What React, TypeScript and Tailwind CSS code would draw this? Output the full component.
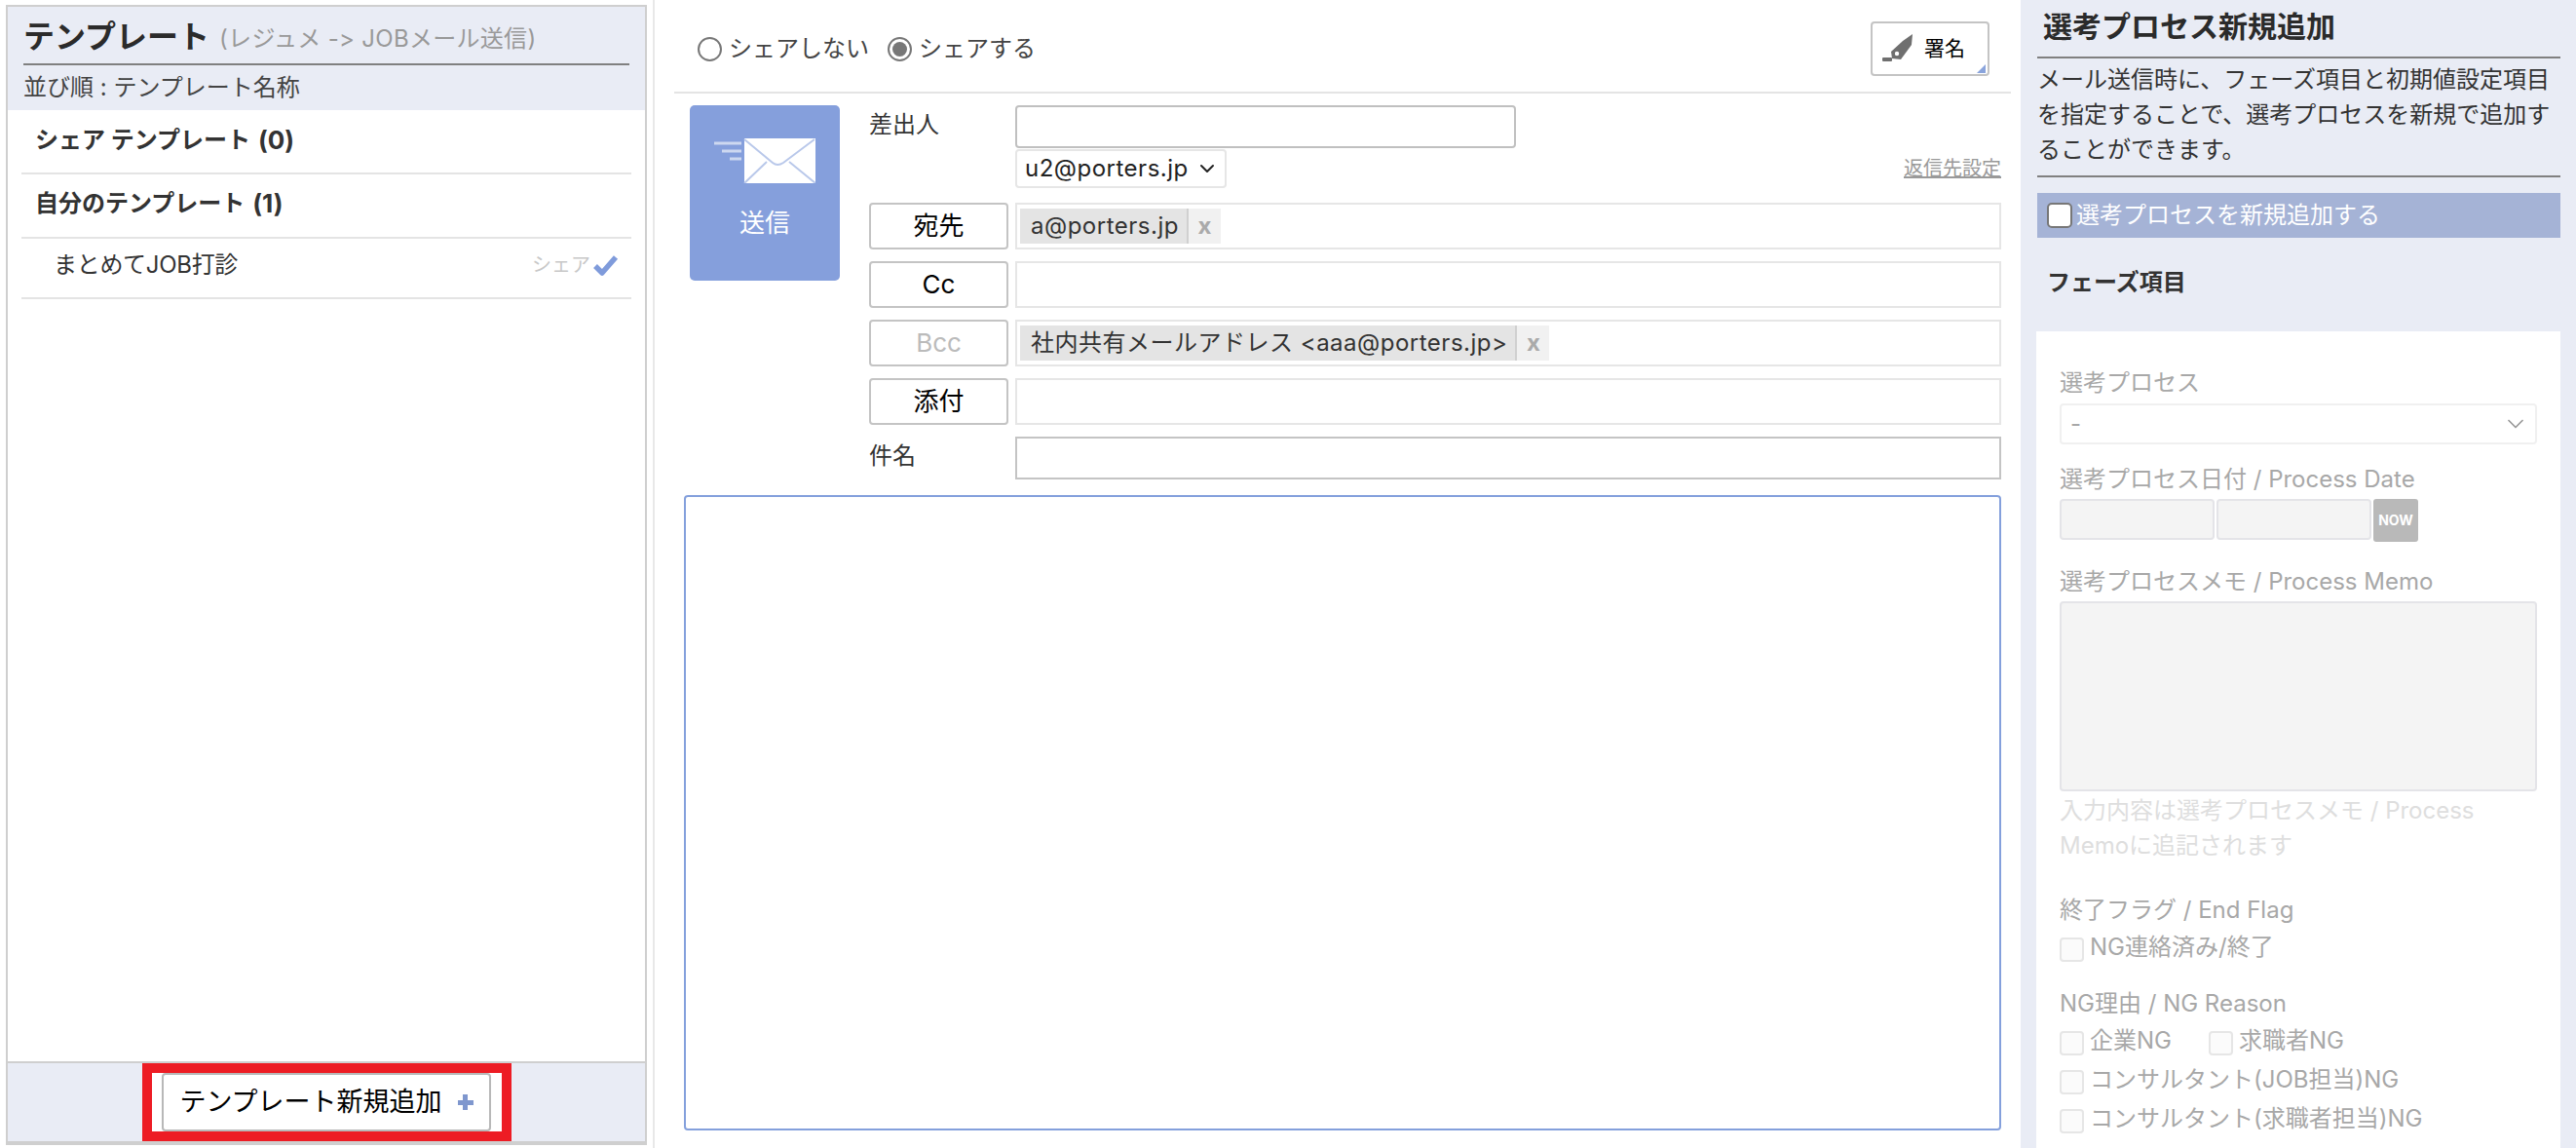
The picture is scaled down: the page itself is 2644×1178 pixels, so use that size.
import React from "react";
import { ChevronDown } from "lucide-react";

const Chip = ({ text }: { text: string }) => (
  <div className="flex h-[36px] items-center">
    <span className="flex h-full items-center bg-[#e4e4e4] pl-[11px] pr-[8px] tracking-[0.5px] text-[#333]">{text}</span>
    <span className="flex h-full w-[35px] items-center justify-center border-l-2 border-[#d0d0d0] bg-[#f1f1f1] text-[24px] font-bold text-[#aaa]">
      x
    </span>
  </div>
);

const Row = ({ label, muted, chip }: { label: string; muted?: boolean; chip?: string }) => (
  <div className="mt-[12px] flex h-[48px] gap-[7px]">
    <button
      type="button"
      className={`h-full w-[143px] rounded-[4px] border-2 border-[#c4c4c4] bg-white text-[26px] ${muted ? "text-[#bbb]" : "text-black"}`}
    >
      {label}
    </button>
    <div className="flex flex-1 items-center border-2 border-[#e6e6e6] pl-[3px]">{chip && <Chip text={chip} />}</div>
  </div>
);

const Check = ({ label, className = "" }: { label: string; className?: string }) => (
  <label className={`flex h-[36px] items-center gap-[6px] ${className}`}>
    <input
      type="checkbox"
      disabled
      className="mt-[4px] h-[25px] w-[25px] appearance-none rounded-[4px] border-2 border-[#e6e6e6] bg-[#fbfbfb]"
    />
    {label}
  </label>
);

const Envelope = () => (
  <svg width="104" height="46" viewBox="0 0 104 46" className="mt-[34px]">
    <g stroke="#cdd8f0" strokeWidth="3">
      <path d="M0 5h28M8 13h20M16 21h12" />
    </g>
    <rect x="31" y="0" width="73" height="46" fill="#fff" />
    <path d="M31 1l29 24q5 4 11 0l32-24M31 46l23-22M104 46l-27-22" fill="none" stroke="#b9c8ea" strokeWidth="2" />
  </svg>
);

const Pen = () => (
  <svg width="32" height="30" viewBox="0 0 32 30">
    <path d="M31 0l-1 11-11 15-9-1-1-7 12-11z" fill="#6f6f6f" />
    <circle cx="15" cy="20" r="2.2" fill="#fff" />
    <rect x="0" y="24" width="10" height="4" rx="1" fill="#6f6f6f" />
  </svg>
);

export default function App() {
  return (
    <div className="flex h-[1178px] w-[2644px] overflow-hidden bg-white font-['Inter','Noto_Sans_CJK_JP',sans-serif] text-[24px] leading-[36px] text-[#333] [font-variant-ligatures:none]">
      {/* templates */}
      <aside className="h-full w-[672px] shrink-0 border-r-2 border-[#e8e8e8] pl-[6px] pt-[5px]">
        <div className="flex h-[1170px] w-[658px] flex-col border-2 border-[#cfcfcf]">
          <div className="bg-[#e9ecf5] px-[16px]">
            <div className="flex h-[60px] items-center border-b-2 border-[#808080] pt-[4px]">
              <h1 className="text-[32px] font-bold text-[#2b2b2b]">テンプレート</h1>
              <span className="ml-[10px] mt-[3px] text-[24px] tracking-[0.3px] text-[#999]">(レジュメ -&gt; JOBメール送信)</span>
            </div>
            <div className="flex h-[46px] items-center text-[#444]">並び順 : テンプレート名称</div>
          </div>
          <div className="flex-1 px-[14px]">
            <div className="flex h-[66px] items-center border-b-2 border-[#e4e4e4] pb-[2px] pl-[14px] font-bold">
              シェア テンプレート<span className="ml-[8px] text-[26px]">(0)</span>
            </div>
            <div className="flex h-[66px] items-center border-b-2 border-[#e4e4e4] pb-[4px] pl-[14px] font-bold">
              自分のテンプレート<span className="ml-[8px] text-[26px]">(1)</span>
            </div>
            <div className="flex h-[62px] items-center border-b-2 border-[#e4e4e4] pb-[6px] pl-[33px] pr-[13px]">
              <span className="flex-1 tracking-[-0.3px]">まとめてJOB打診</span>
              <span className="text-[20px] text-[#c8c8c8]">シェア</span>
              <svg width="27" height="22" viewBox="0 0 27 22" className="ml-[2px]">
                <path d="M3 12l7 7L24 3" fill="none" stroke="#7f9bdb" strokeWidth="5.5" strokeLinejoin="round" />
              </svg>
            </div>
          </div>
          <div className="flex h-[84px] justify-center border-y-2 border-[#cfcfcf] bg-[#e9ecf5]">
            <div className="flex w-[379px] items-center justify-center border-10 border-[#ed1c24] bg-white">
              <button
                type="button"
                className="flex h-[60px] w-[338px] items-center justify-center gap-[16px] rounded-[4px] border-2 border-[#b8b8b8] bg-white text-[27px] text-black"
              >
                テンプレート新規追加
                <span className="relative h-[16px] w-[16px] bg-[linear-gradient(#7f97ce,#7f97ce)] bg-[length:5px_16px] bg-center bg-no-repeat">
                  <span className="absolute left-0 top-[5.5px] h-[5px] w-[16px] bg-[#7f97ce]" />
                </span>
              </button>
            </div>
          </div>
        </div>
      </aside>

      {/* mail form */}
      <main className="h-full w-[1402px] shrink-0">
        <div className="ml-[20px] mr-[10px] flex h-[96px] items-center border-b-2 border-[#e4e4e4] pl-[24px] pr-[22px]">
          <label className="mt-[6px] flex items-center gap-[7px] text-[#444]">
            <span className="h-[25px] w-[25px] rounded-full border-2 border-[#777] bg-white" />
            シェアしない
          </label>
          <label className="ml-[19px] mt-[6px] flex flex-1 items-center gap-[7px] text-[#444]">
            <span className="flex h-[25px] w-[25px] items-center justify-center rounded-full border-2 border-[#777]">
              <span className="h-[15px] w-[15px] rounded-full bg-[#777]" />
            </span>
            シェアする
          </label>
          <button
            type="button"
            className="relative mt-[6px] flex h-[56px] w-[122px] items-center gap-[11px] rounded-[4px] border-2 border-[#c4c4c4] bg-white pl-[10px] text-[21px] text-black"
          >
            <Pen />
            署名
            <svg width="9" height="9" viewBox="0 0 9 9" className="absolute bottom-[1px] right-[2px]">
              <path d="M9 0v9H0z" fill="#8aa4dc" />
            </svg>
          </button>
        </div>

        <div className="flex pl-[36px] pt-[12px]">
          <button
            type="button"
            className="flex h-[180px] w-[154px] flex-col items-center rounded-[5px] bg-[#859fdc] text-[26px] text-white"
          >
            <Envelope />
            <span className="mt-[23px]">送信</span>
          </button>

          <div className="ml-[30px] w-[1162px]">
            <div className="flex gap-0">
              <span className="w-[150px] pt-[2px]">差出人</span>
              <div className="flex-1">
                <div className="h-[44px] w-[514px] rounded-[4px] border-2 border-[#c0c0c0]" />
                <div className="mt-[1px] flex items-center justify-between">
                  <div className="flex h-[40px] w-[217px] items-center justify-between rounded-[4px] border-2 border-[#e6e6e6] pl-[8px] pr-[6px] tracking-[0.5px] text-[#222]">
                    u2@porters.jp
                    <ChevronDown size={24} strokeWidth={2} className="text-[#222]" />
                  </div>
                  <a className="text-[20px] text-[#999] underline">返信先設定</a>
                </div>
              </div>
            </div>
            <div className="mt-[15px] flex h-[48px] gap-[7px]">
              <button
                type="button"
                className="h-full w-[143px] rounded-[4px] border-2 border-[#c4c4c4] bg-white text-[26px] text-black"
              >
                宛先
              </button>
              <div className="flex flex-1 items-center border-2 border-[#e6e6e6] pl-[3px]">
                <Chip text="a@porters.jp" />
              </div>
            </div>
            <Row label="Cc" />
            <Row label="Bcc" muted chip="社内共有メールアドレス <aaa@porters.jp>" />
            <Row label="添付" />
            <div className="mt-[12px] flex items-center">
              <span className="w-[150px] pb-[4px]">件名</span>
              <div className="h-[44px] flex-1 border-2 border-[#c4c4c4]" />
            </div>
          </div>
        </div>

        <div className="ml-[30px] mt-[16px] h-[652px] w-[1352px] rounded-[4px] border-2 border-[#84a0dc]" />
      </main>

      {/* new selection process */}
      <section className="flex h-full w-[570px] shrink-0 flex-col bg-[#e9ecf5] pl-[17px] pr-[16px]">
        <h2 className="flex h-[60px] shrink-0 items-center border-b-2 border-[#808080] pb-[4px] pl-[6px] text-[30px] font-bold text-[#2b2b2b]">
          選考プロセス新規追加
        </h2>
        <p className="shrink-0 border-b-2 border-[#808080] pb-[8px] pt-[4px]">
          メール送信時に、フェーズ項目と初期値設定項目を指定することで、選考プロセスを新規で追加することができます。
        </p>
        <label className="mt-[16px] flex h-[46px] shrink-0 items-center gap-[4px] bg-[#a5b3d6] pl-[10px] text-white">
          <input
            type="checkbox"
            className="h-[26px] w-[26px] appearance-none rounded-[5px] border-2 border-[#777] bg-white"
          />
          選考プロセスを新規追加する
        </label>
        <div className="mt-[28px] shrink-0 pl-[10px] font-bold">フェーズ項目</div>

        <div className="-ml-[1px] mt-[32px] flex-1 bg-white px-[24px] pt-[35px] text-[#a8a8a8]">
          <div>選考プロセス</div>
          <div className="mt-[3px] flex h-[42px] items-center justify-between rounded-[4px] border-2 border-[#f0f0f0] pl-[9px] pr-[6px]">
            -
            <ChevronDown size={28} strokeWidth={1.5} className="text-[#999]" />
          </div>
          <div className="mt-[18px]">選考プロセス日付 / Process Date</div>
          <div className="mt-[2px] flex h-[44px] items-start gap-[2px]">
            <div className="h-[42px] w-[159px] rounded-[4px] border-2 border-[#e4e4e8] bg-[#f4f4f4]" />
            <div className="h-[42px] w-[159px] rounded-[4px] border-2 border-[#e4e4e8] bg-[#f4f4f4]" />
            <button
              type="button"
              className="h-[44px] w-[46px] rounded-[3px] bg-[#b9b9b9] text-[14px] font-bold text-white"
            >
              NOW
            </button>
          </div>
          <div className="mt-[23px]">選考プロセスメモ / Process Memo</div>
          <div className="mt-[2px] h-[195px] rounded-[4px] border-2 border-[#e4e4e8] bg-[#f4f4f4]" />
          <p className="mt-[2px] text-[#dedede]">入力内容は選考プロセスメモ / Process Memoに追記されます</p>
          <div className="mt-[30px]">終了フラグ / End Flag</div>
          <Check label="NG連絡済み/終了" className="mt-[2px]" />
          <div className="mt-[22px]">NG理由 / NG Reason</div>
          <div className="mt-[2px] flex">
            <Check label="企業NG" className="w-[153px]" />
            <Check label="求職者NG" />
          </div>
          <Check label="コンサルタント(JOB担当)NG" className="mt-[4px]" />
          <Check label="コンサルタント(求職者担当)NG" className="mt-[4px]" />
        </div>
      </section>
    </div>
  );
}
